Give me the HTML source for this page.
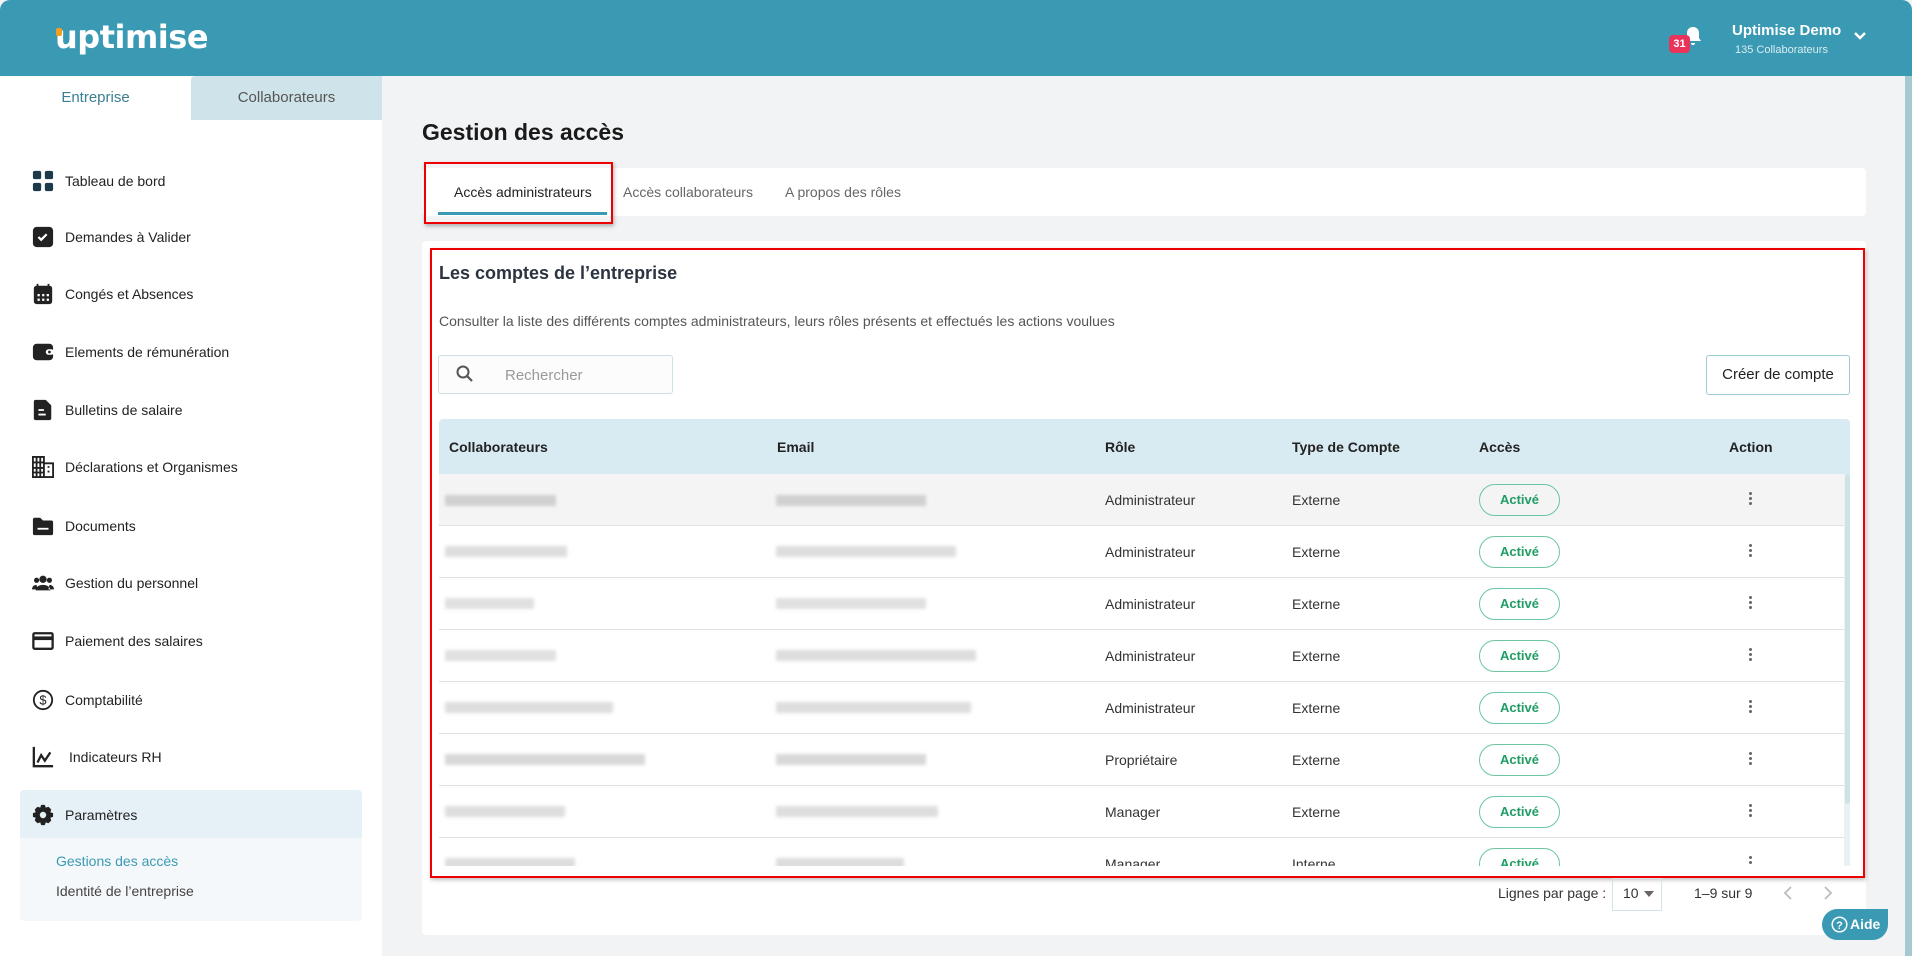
<!DOCTYPE html>
<html><head><meta charset="utf-8"><style>
*{box-sizing:border-box;margin:0;padding:0}
body{width:1912px;height:956px;overflow:hidden;background:#f2f3f5;font-family:"Liberation Sans",sans-serif;color:#222;position:relative}
.abs{position:absolute}
.hdr{left:0;top:0;width:1912px;height:76px;background:#3a9ab3;border-top-left-radius:10px;border-top-right-radius:10px}
.logo{left:55px;top:18px;font-size:32px;font-weight:bold;color:#fff;letter-spacing:-0.5px;font-family:"DejaVu Sans","Liberation Sans",sans-serif}
.side{left:0;top:76px;width:382px;height:880px;background:#fff}
.tab1{left:0;top:76px;width:191px;height:44px;text-align:center;line-height:44px;color:#3b7f93;font-size:15px}
.tab2{left:191px;top:76px;width:191px;height:44px;background:#cfe4ea;text-align:center;line-height:44px;color:#555;font-size:15px;border-top-left-radius:4px}
.mi{left:32px;font-size:14px;color:#222;display:flex;align-items:center;height:26px}
.mi svg{width:22px;height:22px;margin-right:11px}
.sb{right:0;top:76px;width:7px;height:880px;background:#a4c9ce}
.blur{position:absolute;height:11px;background:#c8c8c8;filter:blur(1.5px);opacity:.8}
.row{position:absolute;left:439px;width:1411px;height:52px;border-bottom:1px solid #e2e2e2;font-size:14px;color:#333}
.row span{position:absolute;top:18px}
.pill{position:absolute;left:1040px;top:10px;width:81px;height:32px;border:1.5px solid #6cc6a0;border-radius:16px;color:#1f9e63;font-weight:bold;font-size:13px;text-align:center;line-height:29px}
.dots{position:absolute;left:1310px;top:18px;width:4px}
.dots i{display:block;width:3px;height:3px;background:#666;border-radius:50%;margin-bottom:2px}
</style></head><body>
<div class="abs hdr"></div>
<div class="abs logo">uptimise</div>
<div class="abs" style="left:56px;top:28px;width:6px;height:8px;background:#f0a01e;border-radius:2px"></div>
<svg class="abs" style="left:1684px;top:26px" width="18" height="20" viewBox="0 0 18 20"><path d="M9 1c-4 0-6 3-6 6v5l-2 3h16l-2-3V7c0-3-2-6-6-6zM7 17h4a2 2 0 0 1-4 0z" fill="#fff"/></svg>
<div class="abs" style="left:1669px;top:35px;width:21px;height:18px;background:#e8345a;border-radius:4px;color:#fff;font-size:11px;font-weight:bold;text-align:center;line-height:18px">31</div>
<div class="abs" style="left:1732px;top:22px;color:#fff;font-weight:bold;font-size:15px">Uptimise Demo</div>
<div class="abs" style="left:1735px;top:44px;color:#d9ecf1;font-size:11px">135 Collaborateurs</div>
<svg class="abs" style="left:1853px;top:31px" width="14" height="10" viewBox="0 0 14 10"><path d="M2 2l5 5 5-5" stroke="#fff" stroke-width="2.5" fill="none"/></svg>
<div class="abs sb" style="top:76px"></div>

<div class="abs side"></div>
<div class="abs tab1">Entreprise</div>
<div class="abs tab2">Collaborateurs</div>

<div class="abs mi" style="top:168px"><svg viewBox="0 0 24 24"><rect x="1" y="1" width="9" height="9" rx="2" fill="#1d3a4a"/><rect x="14" y="1" width="9" height="9" rx="2" fill="#1d3a4a"/><rect x="1" y="14" width="9" height="9" rx="2" fill="#1d3a4a"/><rect x="14" y="14" width="9" height="9" rx="2" fill="#1d3a4a"/></svg>Tableau de bord</div>
<div class="abs mi" style="top:224px"><svg viewBox="0 0 24 24"><rect x="1" y="1" width="22" height="22" rx="4" fill="#222"/><path d="M7 12l3 3 6-6" stroke="#fff" stroke-width="2.5" fill="none"/></svg>Demandes à Valider</div>
<div class="abs mi" style="top:281px"><svg viewBox="0 0 24 24"><rect x="2" y="3" width="20" height="20" rx="3" fill="#222"/><path d="M6 1v4M18 1v4" stroke="#222" stroke-width="2"/><g fill="#fff"><rect x="6" y="12" width="2.5" height="2.5"/><rect x="11" y="12" width="2.5" height="2.5"/><rect x="16" y="12" width="2.5" height="2.5"/><rect x="6" y="17" width="2.5" height="2.5"/><rect x="11" y="17" width="2.5" height="2.5"/><rect x="16" y="17" width="2.5" height="2.5"/></g></svg>Congés et Absences</div>
<div class="abs mi" style="top:339px"><svg viewBox="0 0 24 24"><rect x="1" y="3" width="22" height="18" rx="4" fill="#222"/><rect x="15" y="9" width="9" height="6" rx="3" fill="#fff"/><circle cx="19" cy="12" r="1.5" fill="#222"/></svg>Elements de rémunération</div>
<div class="abs mi" style="top:397px"><svg viewBox="0 0 24 24"><path d="M4 1h11l6 6v14a2 2 0 0 1-2 2H4a2 2 0 0 1-2-2V3a2 2 0 0 1 2-2z" fill="#222"/><path d="M7 12h6M7 17h8" stroke="#fff" stroke-width="2"/></svg>Bulletins de salaire</div>
<div class="abs mi" style="top:454px"><svg viewBox="0 0 24 24"><path d="M1 1h12v22H1zM13 8h10v15H13z" fill="none" stroke="#222" stroke-width="2"/><path d="M1 7h12M1 13h12M1 18h12M5 1v22M9 1v22" stroke="#222" stroke-width="2"/><path d="M17 12h2M17 17h2" stroke="#222" stroke-width="2"/></svg>Déclarations et Organismes</div>
<div class="abs mi" style="top:513px"><svg viewBox="0 0 24 24"><path d="M1 5a2 2 0 0 1 2-2h6l3 3h9a2 2 0 0 1 2 2v12a2 2 0 0 1-2 2H3a2 2 0 0 1-2-2z" fill="#222"/><path d="M6 15h12" stroke="#fff" stroke-width="2"/></svg>Documents</div>
<div class="abs mi" style="top:570px"><svg viewBox="0 0 24 24"><circle cx="12" cy="8" r="4" fill="#222"/><circle cx="5" cy="9" r="2.8" fill="#222"/><circle cx="19" cy="9" r="2.8" fill="#222"/><path d="M4 20c0-4 4-6 8-6s8 2 8 6zM0 19c0-3 2-5 5-5l1 5zM24 19c0-3-2-5-5-5l-1 5z" fill="#222"/></svg>Gestion du personnel</div>
<div class="abs mi" style="top:628px"><svg viewBox="0 0 24 24"><rect x="1.5" y="3.5" width="21" height="17" rx="1.5" fill="none" stroke="#222" stroke-width="2.5"/><rect x="1.5" y="7" width="21" height="4" fill="#222"/></svg>Paiement des salaires</div>
<div class="abs mi" style="top:687px"><svg viewBox="0 0 24 24"><circle cx="12" cy="12" r="10" fill="none" stroke="#222" stroke-width="2"/><text x="12" y="17" font-size="14" text-anchor="middle" fill="#222" font-family="Liberation Sans">$</text></svg>Comptabilité</div>
<div class="abs mi" style="top:744px"><svg viewBox="0 0 24 24"><path d="M2 1v21h21" stroke="#222" stroke-width="2.5" fill="none"/><path d="M6 18l4-8 4 6 6-9" stroke="#222" stroke-width="2.5" fill="none"/></svg><span style="margin-left:4px">Indicateurs RH</span></div>
<div class="abs" style="left:20px;top:790px;width:342px;height:131px;background:#f5f8fa;border-radius:4px"></div>
<div class="abs" style="left:20px;top:790px;width:342px;height:48px;background:#e6f1f7;border-radius:4px 4px 0 0"></div>
<div class="abs mi" style="top:802px"><svg viewBox="0 0 24 24"><path d="M10 1h4l1 3 3-1 3 3-1 3 3 1v4l-3 1 1 3-3 3-3-1-1 3h-4l-1-3-3 1-3-3 1-3-3-1v-4l3-1-1-3 3-3 3 1z" fill="#222"/><circle cx="12" cy="12" r="3.5" fill="#e6f1f7"/></svg>Paramètres</div>
<div class="abs" style="left:56px;top:853px;color:#3a9ab3;font-size:14px">Gestions des accès</div>
<div class="abs" style="left:56px;top:883px;color:#444;font-size:14px">Identité de l’entreprise</div>

<div class="abs" style="left:422px;top:119px;font-size:23px;font-weight:bold;color:#1a1a1a">Gestion des accès</div>
<div class="abs" style="left:422px;top:168px;width:1444px;height:48px;background:#fff;border-radius:4px"></div>
<div class="abs" style="left:454px;top:184px;font-size:14px;color:#222">Accès administrateurs</div>
<div class="abs" style="left:623px;top:184px;font-size:14px;color:#666">Accès collaborateurs</div>
<div class="abs" style="left:785px;top:184px;font-size:14px;color:#666">A propos des rôles</div>
<div class="abs" style="left:438px;top:212px;width:169px;height:3px;background:#3a9ab3"></div>
<div class="abs" style="left:424px;top:162px;width:189px;height:62px;border:2px solid #e00;box-shadow:1px 2px 4px rgba(0,0,0,.3)"></div>

<div class="abs" style="left:422px;top:241px;width:1444px;height:694px;background:#fff;border-radius:4px"></div>
<div class="abs" style="left:439px;top:263px;font-size:18px;font-weight:bold;color:#2b3440">Les comptes de l’entreprise</div>
<div class="abs" style="left:439px;top:313px;font-size:14px;color:#555">Consulter la liste des différents comptes administrateurs, leurs rôles présents et effectués les actions voulues</div>
<div class="abs" style="left:438px;top:355px;width:235px;height:39px;border:1px solid #cfe0e6;border-radius:3px;background:#fcfcfc"></div>
<svg class="abs" style="left:455px;top:364px" width="20" height="20" viewBox="0 0 20 20"><circle cx="8" cy="8" r="5.5" fill="none" stroke="#555" stroke-width="2"/><path d="M12 12l5 5" stroke="#555" stroke-width="2.2"/></svg>
<div class="abs" style="left:505px;top:367px;font-size:15px;color:#999">Rechercher</div>
<div class="abs" style="left:1706px;top:355px;width:144px;height:40px;border:1px solid #9ccbd6;border-radius:3px;text-align:center;line-height:38px;font-size:15px;color:#222">Créer de compte</div>

<div class="abs" style="left:439px;top:419px;width:1411px;height:55px;background:#d9ebf2;border-radius:4px 4px 0 0;font-size:14px;font-weight:bold;color:#222">
<span class="abs" style="left:10px;top:20px">Collaborateurs</span><span class="abs" style="left:338px;top:20px">Email</span><span class="abs" style="left:666px;top:20px">Rôle</span><span class="abs" style="left:853px;top:20px">Type de Compte</span><span class="abs" style="left:1040px;top:20px">Accès</span><span class="abs" style="left:1290px;top:20px">Action</span></div>

<div class="abs" style="left:439px;top:474px;width:1411px;height:392px;overflow:hidden">
<div style="position:relative;left:-439px;top:-474px">
<div class="row" style="top:474px;background:#f4f4f4"><div class="blur" style="left:6px;top:21px;width:111px"></div><div class="blur" style="left:337px;top:21px;width:150px"></div><span style="left:666px">Administrateur</span><span style="left:853px">Externe</span><div class="pill">Activé</div><div class="dots"><i></i><i></i><i></i></div></div>
<div class="row" style="top:526px"><div class="blur" style="left:6px;top:20px;width:122px;opacity:.6"></div><div class="blur" style="left:337px;top:20px;width:180px;opacity:.6"></div><span style="left:666px">Administrateur</span><span style="left:853px">Externe</span><div class="pill">Activé</div><div class="dots"><i></i><i></i><i></i></div></div>
<div class="row" style="top:578px"><div class="blur" style="left:6px;top:20px;width:89px;opacity:.55"></div><div class="blur" style="left:337px;top:20px;width:150px;opacity:.55"></div><span style="left:666px">Administrateur</span><span style="left:853px">Externe</span><div class="pill">Activé</div><div class="dots"><i></i><i></i><i></i></div></div>
<div class="row" style="top:630px"><div class="blur" style="left:6px;top:20px;width:111px;opacity:.55"></div><div class="blur" style="left:337px;top:20px;width:200px;opacity:.6"></div><span style="left:666px">Administrateur</span><span style="left:853px">Externe</span><div class="pill">Activé</div><div class="dots"><i></i><i></i><i></i></div></div>
<div class="row" style="top:682px"><div class="blur" style="left:6px;top:20px;width:168px;opacity:.6"></div><div class="blur" style="left:337px;top:20px;width:195px;opacity:.6"></div><span style="left:666px">Administrateur</span><span style="left:853px">Externe</span><div class="pill">Activé</div><div class="dots"><i></i><i></i><i></i></div></div>
<div class="row" style="top:734px"><div class="blur" style="left:6px;top:20px;width:200px;opacity:.7"></div><div class="blur" style="left:337px;top:20px;width:150px;opacity:.7"></div><span style="left:666px">Propriétaire</span><span style="left:853px">Externe</span><div class="pill">Activé</div><div class="dots"><i></i><i></i><i></i></div></div>
<div class="row" style="top:786px"><div class="blur" style="left:6px;top:20px;width:120px;opacity:.6"></div><div class="blur" style="left:337px;top:20px;width:162px;opacity:.6"></div><span style="left:666px">Manager</span><span style="left:853px">Externe</span><div class="pill">Activé</div><div class="dots"><i></i><i></i><i></i></div></div>
<div class="row" style="top:838px"><div class="blur" style="left:6px;top:20px;width:130px;opacity:.6"></div><div class="blur" style="left:337px;top:20px;width:128px;opacity:.6"></div><span style="left:666px">Manager</span><span style="left:853px">Interne</span><div class="pill">Activé</div><div class="dots"><i></i><i></i><i></i></div></div>
</div>
<div style="position:absolute;right:0;top:0;width:6px;height:392px;background:#e8f2f5"></div>
<div style="position:absolute;right:0;top:0;width:5px;height:330px;background:#cfe2e8;border-radius:3px"></div>
</div>
<div class="abs" style="left:430px;top:248px;width:1435px;height:630px;border:2px solid #e00;box-shadow:1px 2px 4px rgba(0,0,0,.25)"></div>

<div class="abs" style="left:1498px;top:885px;font-size:14px;color:#333">Lignes par page :</div>
<div class="abs" style="left:1612px;top:878px;width:50px;height:33px;border:1px solid #d3e3e8"></div>
<div class="abs" style="left:1623px;top:885px;font-size:14px;color:#333">10</div>
<svg class="abs" style="left:1644px;top:891px" width="10" height="6"><path d="M0 0h10L5 6z" fill="#666"/></svg>
<div class="abs" style="left:1694px;top:885px;font-size:14px;color:#333">1–9 sur 9</div>
<svg class="abs" style="left:1783px;top:885px" width="10" height="16"><path d="M8 2L2 8l6 6" stroke="#bbb" stroke-width="1.8" fill="none"/></svg>
<svg class="abs" style="left:1823px;top:885px" width="10" height="16"><path d="M2 2l6 6-6 6" stroke="#bbb" stroke-width="1.8" fill="none"/></svg>
<div class="abs" style="left:1822px;top:909px;width:66px;height:31px;background:#3a9ab3;border-radius:16px 0 16px 16px;color:#fff;font-size:14px;font-weight:bold;line-height:31px;padding-left:28px">Aide</div>
<svg class="abs" style="left:1831px;top:916px" width="17" height="17" viewBox="0 0 17 17"><circle cx="8.5" cy="8.5" r="7.3" stroke="#fff" stroke-width="1.5" fill="none"/><text x="8.5" y="13" font-size="11" font-weight="bold" text-anchor="middle" fill="#fff" font-family="Liberation Sans">?</text></svg>
</body></html>
